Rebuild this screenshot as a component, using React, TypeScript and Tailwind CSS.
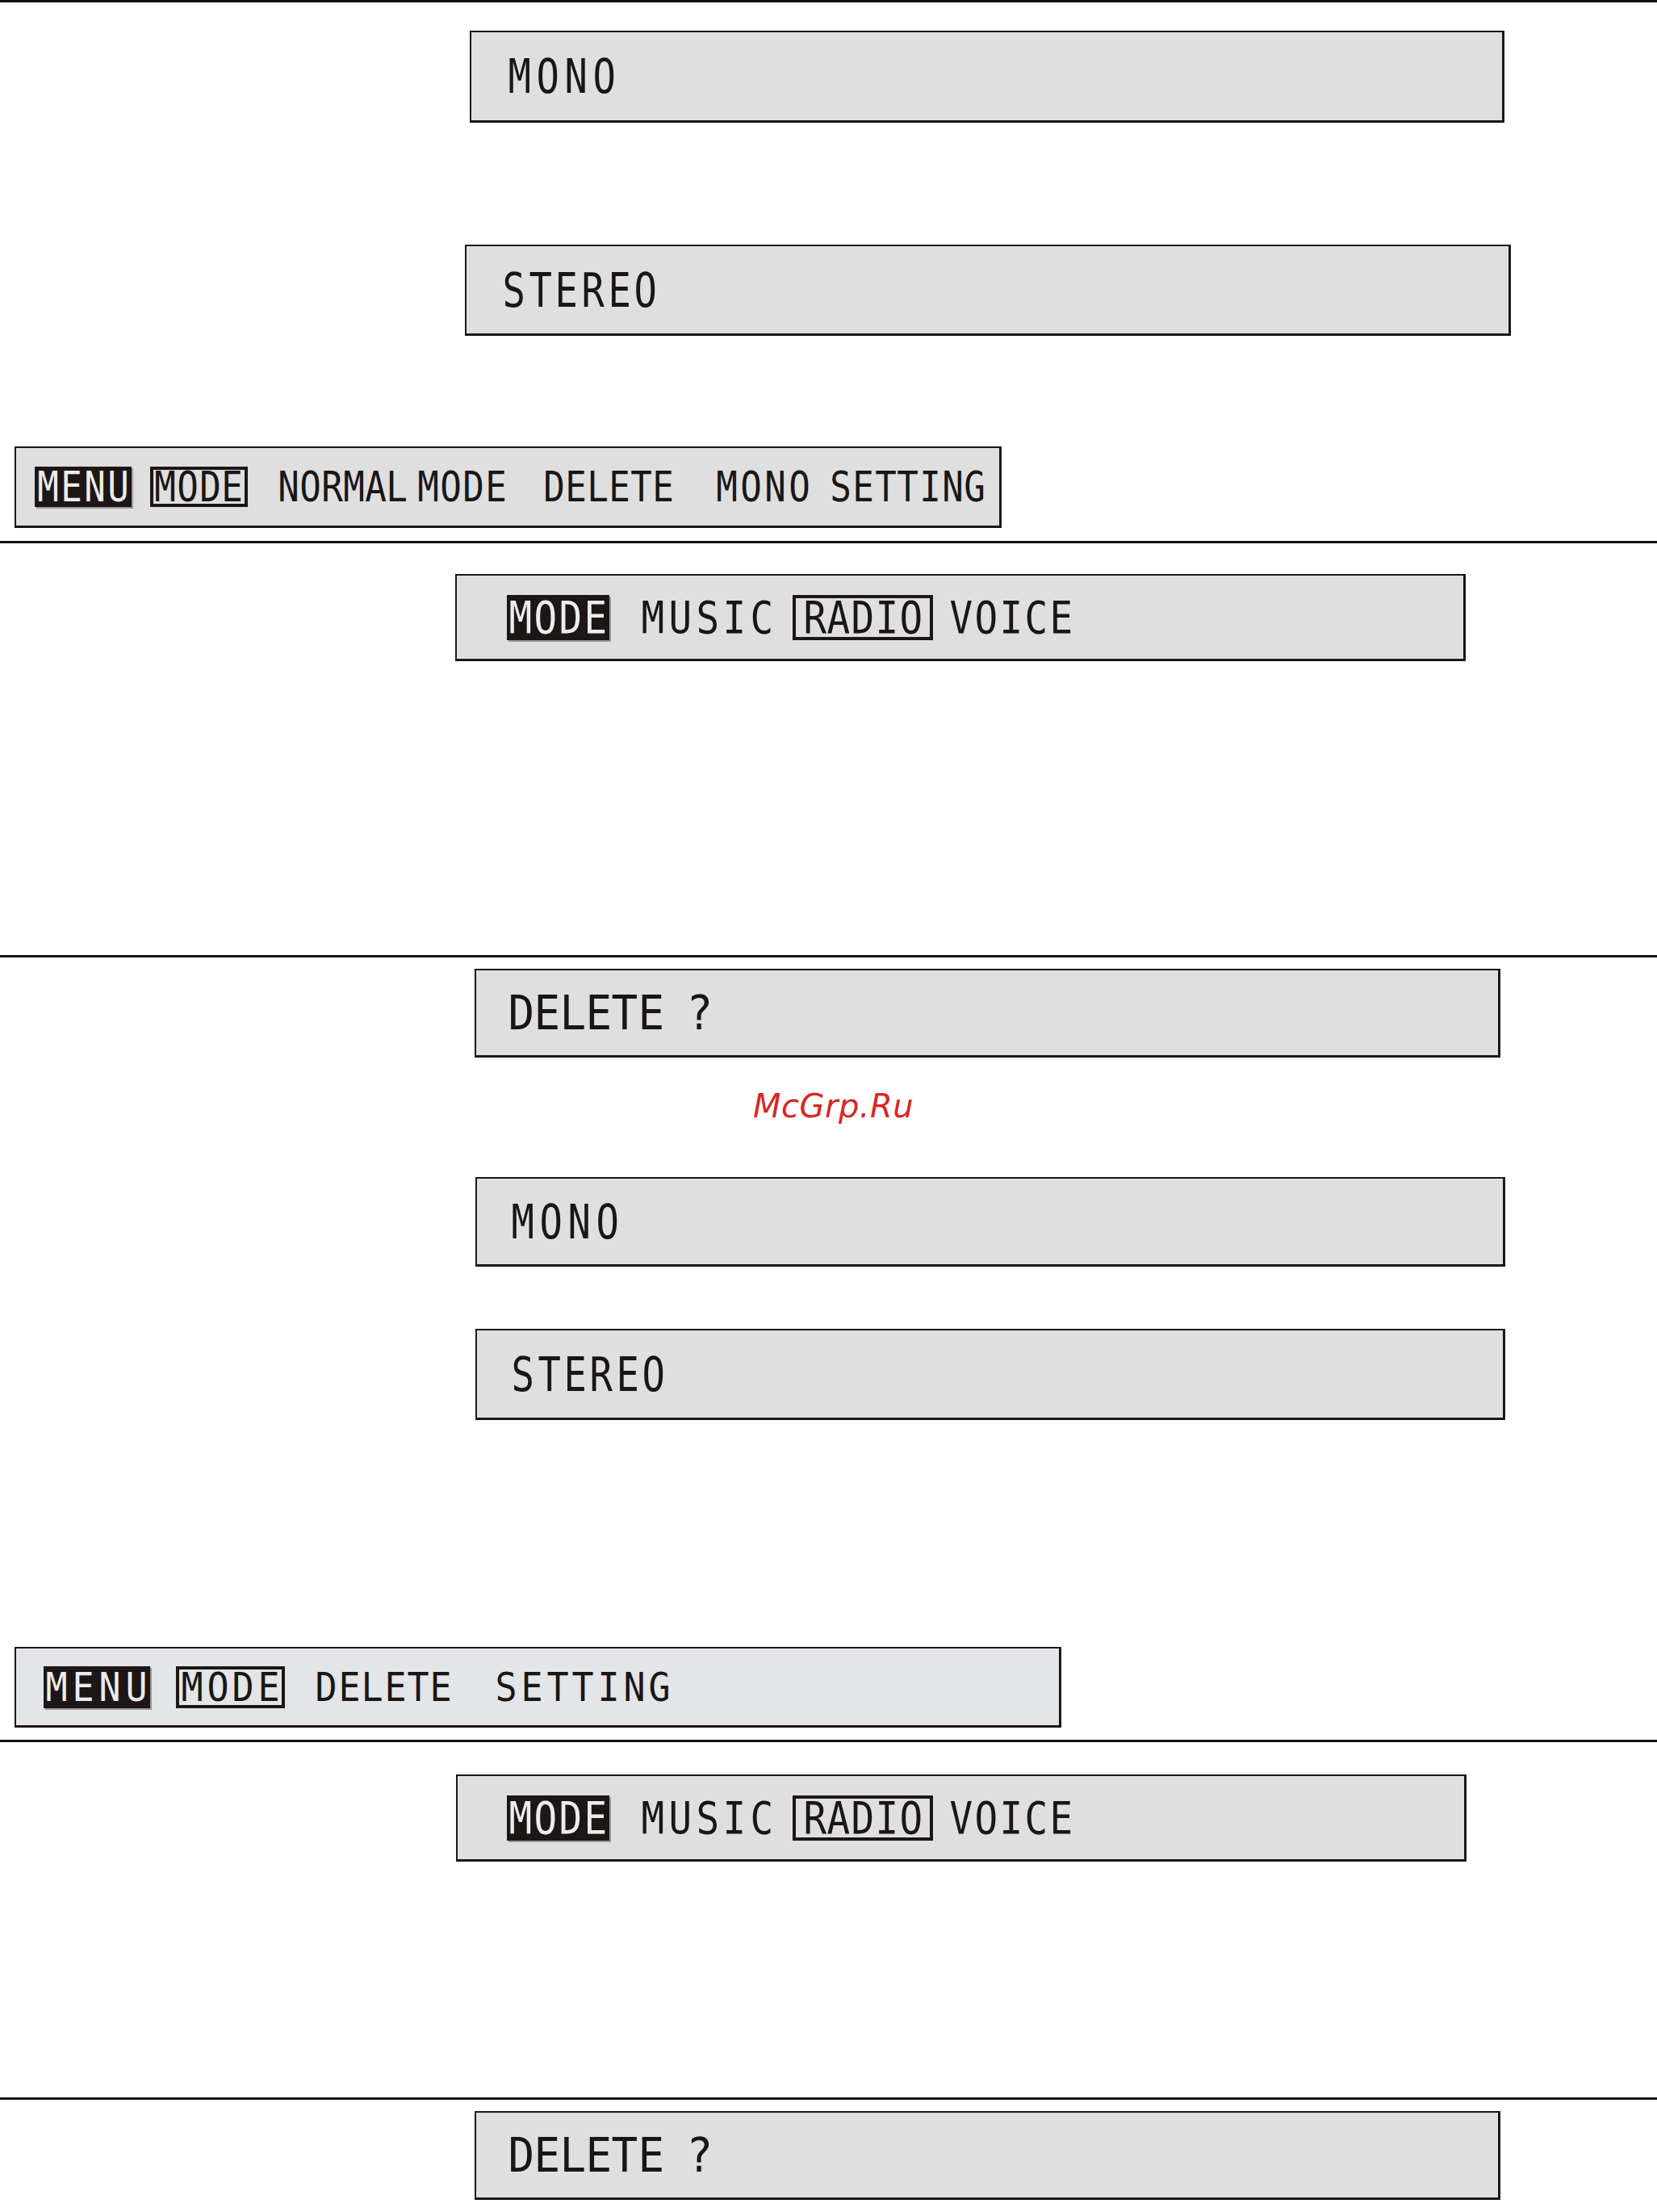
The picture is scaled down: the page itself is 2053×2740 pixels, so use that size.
import React from "react";

function Lcd({
  text,
  w,
  cw,
  sx = "scale-x-[0.85]",
}: {
  text: string;
  w: string;
  cw: string;
  sx?: string;
}) {
  return (
    <span className={`flex shrink-0 justify-between leading-none ${w}`}>
      {Array.from(text).map((c, i) => (
        <span key={i} className={`flex shrink-0 justify-center ${cw}`}>
          <span className={`inline-block ${sx}`}>{c}</span>
        </span>
      ))}
    </span>
  );
}

function Panel({ className, children }: { className: string; children: React.ReactNode }) {
  return (
    <div
      className={`flex shrink-0 items-center border-2 border-r-[3px] border-b-[3px] border-[#1c1818] ${className}`}
    >
      {children}
    </div>
  );
}

function Rule({ className }: { className: string }) {
  return <div className={`h-[3px] w-full shrink-0 bg-[#121212] ${className}`} />;
}

function ModeBar({ className }: { className: string }) {
  return (
    <Panel className={`h-[108px] w-[1252px] bg-[#dfdfdf] text-[56px] ${className}`}>
      <div className="flex h-[56px] w-[127px] shrink-0 items-center justify-center bg-[#1c1716] text-[#ececec] shadow-[2px_2px_0_#9a9a9a]">
        <Lcd text="MODE" w="w-[117px]" cw="w-[24px]" />
      </div>
      <Lcd text="MUSIC" w="ml-[42px] w-[159px]" cw="w-[24px]" />
      <div className="ml-[26px] flex h-[56px] w-[174px] shrink-0 items-center justify-center border-4 border-[#1c1716]">
        <Lcd text="RADIO" w="w-[143px]" cw="w-[24px]" />
      </div>
      <Lcd text="VOICE" w="ml-[23px] w-[148px]" cw="w-[24px]" />
    </Panel>
  );
}

function DeleteBox({ className }: { className: string }) {
  return (
    <Panel className={`h-[110px] w-[1271px] bg-[#dfdfdf] pl-[42px] text-[59px] ${className}`}>
      <Lcd text="DELETE" w="w-[188px]" cw="w-[27px]" sx="scale-x-[0.92]" />
      <Lcd text="?" w="ml-[31px] w-[31px]" cw="w-[31px]" sx="scale-x-[0.92]" />
    </Panel>
  );
}

export default function App() {
  return (
    <div className="flex min-h-[2740px] w-[2053px] flex-col items-start bg-white font-['DejaVu_Sans_Mono','Liberation_Mono',monospace] text-[#1a1616]">
      <Rule className="" />

      <Panel className="ml-[582px] mt-[35px] h-[114px] w-[1282px] bg-[#dfdfdf] pl-[48px] text-[59px]">
        <Lcd text="MONO" w="w-[129px]" cw="w-[24px]" sx="scale-x-[0.8]" />
      </Panel>

      <Panel className="ml-[576px] mt-[151px] h-[113px] w-[1296px] bg-[#dfdfdf] pl-[47px] text-[59px]">
        <Lcd text="STEREO" w="w-[187px]" cw="w-[24px]" sx="scale-x-[0.8]" />
      </Panel>

      <Panel className="ml-[18px] mt-[137px] h-[101px] w-[1223px] bg-[#dfdfdf] pl-[23px] text-[52px]">
        <div className="flex h-[50px] w-[120px] shrink-0 items-center justify-center bg-[#1c1716] text-[#ececec] shadow-[2px_2px_0_#9a9a9a]">
          <Lcd text="MENU" w="w-[109px]" cw="w-[22px]" />
        </div>
        <div className="ml-[23px] flex h-[50px] w-[121px] shrink-0 items-center justify-center border-4 border-[#1c1716]">
          <Lcd text="MODE" w="w-[105px]" cw="w-[22px]" />
        </div>
        <Lcd text="NORMAL" w="ml-[40px] w-[156px]" cw="w-[22px]" />
        <Lcd text="MODE" w="ml-[17px] w-[106px]" cw="w-[22px]" />
        <Lcd text="DELETE" w="ml-[50px] w-[157px]" cw="w-[22px]" />
        <Lcd text="MONO" w="ml-[57px] w-[112px]" cw="w-[22px]" />
        <Lcd text="SETTING" w="ml-[29px] w-[188px]" cw="w-[22px]" />
      </Panel>

      <Rule className="mt-[16px]" />

      <ModeBar className="ml-[564px] mt-[38px] pl-[62px]" />

      <Rule className="mt-[364px]" />

      <DeleteBox className="ml-[588px] mt-[14px]" />

      <div className="ml-[933px] mt-[40px] h-[40px] font-['DejaVu_Sans','Noto_Sans',sans-serif] text-[40px] leading-none tracking-[0.5px] text-[#d92626] italic">
        McGrp.Ru
      </div>

      <Panel className="ml-[589px] mt-[68px] h-[111px] w-[1276px] bg-[#dfdfdf] pl-[45px] text-[59px]">
        <Lcd text="MONO" w="w-[129px]" cw="w-[24px]" sx="scale-x-[0.8]" />
      </Panel>

      <Panel className="ml-[589px] mt-[77px] h-[113px] w-[1276px] bg-[#dfdfdf] pl-[45px] text-[59px]">
        <Lcd text="STEREO" w="w-[186px]" cw="w-[24px]" sx="scale-x-[0.8]" />
      </Panel>

      <Panel className="ml-[18px] mt-[281px] h-[100px] w-[1297px] bg-[#e4e5e7] pl-[34px] text-[50px]">
        <div className="flex h-[52px] w-[132px] shrink-0 items-center justify-center bg-[#1c1716] text-[#ececec] shadow-[2px_2px_0_#9a9a9a]">
          <Lcd text="MENU" w="w-[122px]" cw="w-[23px]" sx="scale-x-[0.9]" />
        </div>
        <div className="ml-[32px] flex h-[52px] w-[135px] shrink-0 items-center justify-center border-4 border-[#1c1716]">
          <Lcd text="MODE" w="w-[118px]" cw="w-[23px]" sx="scale-x-[0.9]" />
        </div>
        <Lcd text="DELETE" w="ml-[40px] w-[165px]" cw="w-[23px]" sx="scale-x-[0.9]" />
        <Lcd text="SETTING" w="ml-[58px] w-[213px]" cw="w-[23px]" sx="scale-x-[0.9]" />
      </Panel>

      <Rule className="mt-[15px]" />

      <ModeBar className="ml-[565px] mt-[40px] pl-[61px]" />

      <Rule className="mt-[292px]" />

      <DeleteBox className="ml-[588px] mt-[14px]" />
    </div>
  );
}
